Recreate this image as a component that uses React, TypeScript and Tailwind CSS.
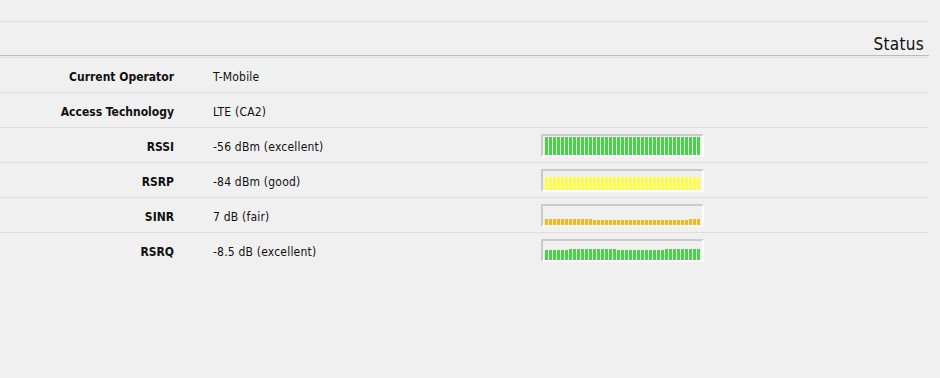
const font = { fontFamily: "'DejaVu Sans Condensed', 'DejaVu Sans', Tahoma, sans-serif" };

type Row = {
  label: string;
  value: string;
  bars?: number[];
  color?: string;
};

const fill = (n: number, h: number) => Array.from({ length: n }, () => h);

const rows: Row[] = [
  { label: "Current Operator", value: "T-Mobile" },
  { label: "Access Technology", value: "LTE (CA2)" },
  { label: "RSSI", value: "-56 dBm (excellent)", bars: fill(39, 18), color: "bg-[#44d444]" },
  { label: "RSRP", value: "-84 dBm (good)", bars: fill(39, 13), color: "bg-[#ffff40]" },
  {
    label: "SINR",
    value: "7 dB (fair)",
    bars: [...fill(12, 6), ...fill(24, 5), ...fill(3, 6)],
    color: "bg-[#fdb515]",
  },
  {
    label: "RSRQ",
    value: "-8.5 dB (excellent)",
    bars: [...fill(6, 10), ...fill(12, 11), ...fill(12, 10), ...fill(9, 11)],
    color: "bg-[#44d444]",
  },
];

const SignalBar = ({ bars, color }: { bars: number[]; color: string }) => {
  return (
    <div className="flex h-[23px] w-[163px] items-end gap-px border-2 border-t-[#cbcbcb] border-l-[#cbcbcb] border-b-white border-r-white px-[2px]">
      {bars.map((h, i) => (
        <div key={i} className={`w-[3px] shrink-0 ${color}`} style={{ height: h }} />
      ))}
    </div>
  );
};

export default function App() {
  return (
    <div className="h-[378px] w-[940px] bg-[#f0f0f0]" style={font}>
      <div className="mr-[11px]">
        <div className="h-[22px] border-b border-[#dddddd]" />
        <div className="flex h-[34px] items-end justify-end border-b border-[#bbbbbb] pb-px pr-[5px]">
          <span className="text-[17px] leading-[20px] tracking-[0.3px] text-[#111]">Status</span>
        </div>
        <div className="mt-px">
          {rows.map((r) => (
            <div key={r.label} className="flex h-[35px] items-center border-t border-[#dddddd] text-[12px] text-[#111]">
              <div className="w-[174px] shrink-0 pt-[3px] text-right font-bold">{r.label}</div>
              <div className="ml-[39px] w-[328px] shrink-0 pt-[3px] tracking-[0.2px]">{r.value}</div>
              {r.bars && r.color && <SignalBar bars={r.bars} color={r.color} />}
            </div>
          ))}
        </div>
      </div>
    </div>
  );
}
